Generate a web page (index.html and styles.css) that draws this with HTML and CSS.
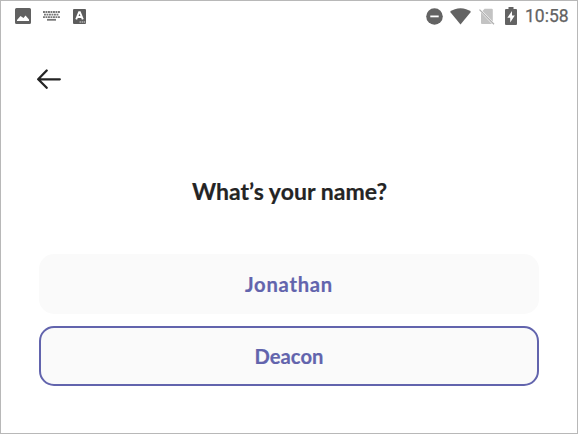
FILE: index.html
```html
<!DOCTYPE html>
<html lang="en">
<head>
<meta charset="utf-8">
<title>What’s your name?</title>
<link rel="stylesheet" href="styles.css">
</head>
<body>
<div class="screen">
  <header class="status">
    <div class="notices">
      <svg width="16" height="16" viewBox="0 0 16 16"><path fill="#616161" fill-rule="evenodd" d="M1.500 0h13Q16 0 16 1.500v13Q16 16 14.500 16h-13Q0 16 0 14.500v-13Q0 0 1.500 0ZM2 13h12V11.500L10.500 7.500 8.500 10 5.500 8 2 12Z"/></svg>
      <svg width="17" height="10" viewBox="0 0 17 10"><g fill="none" stroke="#777" stroke-width="1.800"><path stroke-dasharray="1.900 .6" d="M0 1h17M1 3.600h15M0 6.200h17"/><path d="M4 8.800h9"/></g></svg>
      <svg width="13" height="15" viewBox="0 0 13 15"><rect width="13" height="15" rx="1" fill="#5c5c5c"/><path fill="none" stroke="#fff" stroke-width="1.900" d="M3.200 10.300 6.100 3.200h.8l2.900 7.100M4.200 8h4.600"/><path stroke="#ddd" stroke-dasharray="1.500 .6" d="M6.500 13h6"/></svg>
    </div>
    <div class="system">
      <svg width="17" height="17" viewBox="0 0 17 17"><circle cx="8.500" cy="8.500" r="8.300" fill="#636363"/><path stroke="#fff" stroke-width="1.800" d="M4.300 8.400h8.400"/></svg>
      <svg class="wifi" width="21" height="17" viewBox="0 0 21 17"><path fill="#636363" d="M0 3.800Q4.500.3 10.500.3T21 3.800L10.500 16.600Z"/></svg>
      <svg class="sim" width="16" height="17" viewBox="0 0 16 17"><path fill="#c3c3c3" d="M5.600.7h7.200q1 0 1 1v11.800L3.500 3ZM2 4.500 13 16H3q-1 0-1-1Z"/><path stroke="#b0b0b0" stroke-width="1.300" d="M.5 1.600 15 16.200"/></svg>
      <svg class="battery" width="12" height="18" viewBox="0 0 12 18"><path fill="#636363" d="M3.500 0h5v2H11q1 0 1 1v14q0 1-1 1H1q-1 0-1-1V3q0-1 1-1h2.500Z"/><path fill="#fff" d="M7 4 2.300 10.800h2.900V15.600L9.800 8.600H7Z"/></svg>
      <span class="clock">10:58</span>
    </div>
  </header>
  <nav>
    <button class="back" aria-label="Back"><svg width="24" height="20" viewBox="0 0 24 20"><path fill="none" stroke="#242424" stroke-width="2.300" stroke-linecap="round" stroke-linejoin="round" d="M22.800 10.300H1.200M9.700 1.500 1.200 10.300l8.500 8.500"/></svg></button>
  </nav>
  <h1>What’s your name?</h1>
  <main class="choices">
    <button class="choice"><span class="spaced">Jonathan</span></button>
    <button class="choice selected">Deacon</button>
  </main>
</div>
</body>
</html>
```
FILE: styles.css
```css
* { box-sizing: border-box; }
body { margin: 0; background: #fff; font-family: Lato, "Liberation Sans", sans-serif; }
.screen { width: 578px; height: 434px; border: 1px solid #b8b8b8; overflow: hidden; }
svg { display: block; flex: none; }
button { font: inherit; border: 0; padding: 0; background: none; }
.status { display: flex; justify-content: space-between; height: 30px; padding: 0 9px 0 13.5px; }
.notices, .system { display: flex; align-items: center; }
.notices { gap: 12.5px; }
.system { color: #636363; }
.wifi { margin-left: 7px; }
.sim { margin-left: 8px; }
.battery { margin-left: 10px; }
.clock { margin-left: 8px; font: 400 17.5px/30px Roboto, sans-serif; width: 43px; white-space: nowrap; -webkit-text-stroke: .25px #636363; }
nav { padding: 38px 0 0 36px; }
.back { display: block; }
h1 { margin: 87px 0 0; padding-left: 1px; text-align: center; font-size: 23px; line-height: 30px; font-weight: 700; letter-spacing: .04px; color: #242424; white-space: nowrap; -webkit-text-stroke: .2px #242424; }
.choices { display: grid; gap: 12px; margin: 48px 38px 0; }
.choice { height: 60px; border-radius: 15px; background: #fafafa; color: #6264ad; font-size: 20.2px; line-height: 28px; font-weight: 700; -webkit-text-stroke: .2px #6264ad; }
.spaced { letter-spacing: .75px; }
.selected { border: 2px solid #6264ad; }
```
